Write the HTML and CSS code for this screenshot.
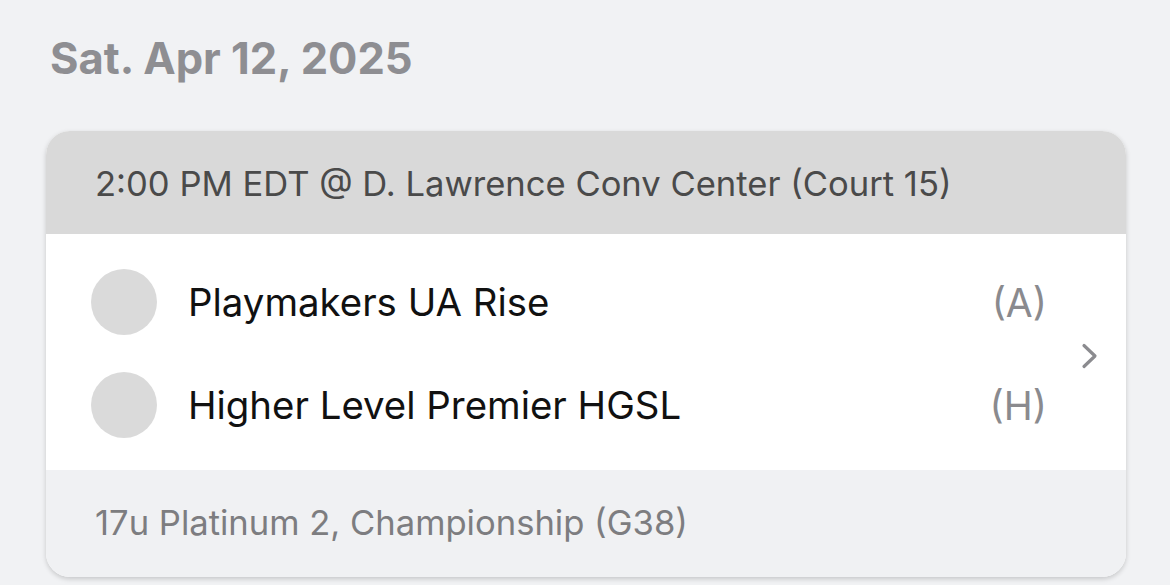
FILE: index.html
```html
<!DOCTYPE html>
<html lang="en">
<head>
<meta charset="utf-8">
<title>Game</title>
<link rel="stylesheet" href="styles.css">
</head>
<body>
<main class="page">
  <h1 class="date">Sat. Apr 12, 2025</h1>
  <section class="card">
    <header class="card-head">2:00 PM EDT @ D. Lawrence Conv Center (Court 15)</header>
    <div class="card-body">
      <div class="teams">
        <div class="team">
          <span class="logo"></span>
          <span class="name">Playmakers UA Rise</span>
          <span class="side">(A)</span>
        </div>
        <div class="team">
          <span class="logo"></span>
          <span class="name">Higher Level Premier HGSL</span>
          <span class="side">(H)</span>
        </div>
      </div>
      <svg class="chev" width="17" height="26" viewBox="0 0 17 26" aria-hidden="true">
        <path d="M3 2.5 L14 13 L3 23.5" fill="none" stroke="#8b8b8f" stroke-width="3.2" stroke-linecap="round" stroke-linejoin="round"/>
      </svg>
    </div>
    <footer class="card-foot">17u Platinum 2, Championship (G38)</footer>
  </section>
</main>
</body>
</html>
```

FILE: styles.css
```css
* { box-sizing: border-box; }
html, body { margin: 0; padding: 0; }
body {
  background: #f1f2f4;
  font-family: Inter, "Noto Sans", "Liberation Sans", sans-serif;
  width: 1170px;
  height: 585px;
  overflow: hidden;
}
.page {
  padding: 30px 44px 0 46px;
}
.date {
  margin: 0 0 0 4px;
  font-size: 43.5px;
  line-height: 56px;
  font-weight: 700;
  color: #8e8e92;
  letter-spacing: 0;
}
.card {
  margin-top: 45px;
  width: 1080px;
  border-radius: 24px;
  overflow: hidden;
  background: #fff;
  box-shadow: 0 2px 5px rgba(0,0,0,0.18);
}
.card-head {
  height: 103px;
  background: #d9d9d9;
  display: flex;
  align-items: center;
  padding: 0 49px;
  font-size: 34.6px;
  color: #4a4a4a;
}
.card-body {
  height: 236px;
  background: #fff;
  display: flex;
  align-items: center;
  padding: 17px 28px 14px 45px;
}
.teams {
  flex: 1;
  display: flex;
  flex-direction: column;
  padding-right: 34px;
}
.team {
  height: 103px;
  display: flex;
  align-items: center;
}
.logo {
  width: 66px;
  height: 66px;
  border-radius: 50%;
  background: #dadada;
  flex: none;
}
.name {
  flex: 1;
  margin-left: 31px;
  font-size: 38.4px;
  color: #111;
}
.side {
  font-size: 39px;
  color: #8a8a8e;
}
.chev { flex: none; margin-top: 4px; }
.card-foot {
  height: 107px;
  background: #f0f1f3;
  display: flex;
  align-items: center;
  padding: 0 49px 4px;
  font-size: 34.6px;
  color: #7d7d80;
}
```
